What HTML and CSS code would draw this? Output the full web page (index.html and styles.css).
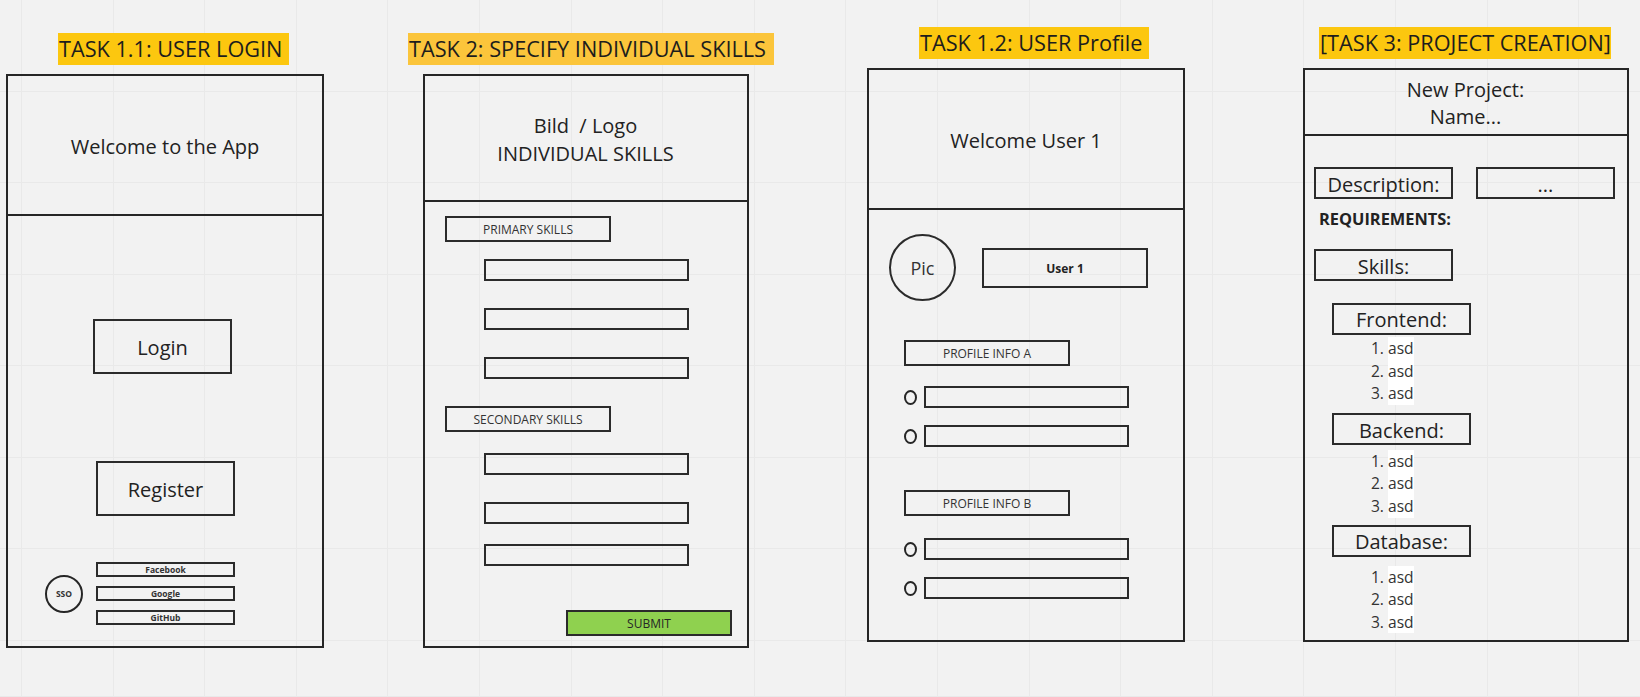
FILE: index.html
```html
<!DOCTYPE html>
<html lang="en">
<head>
<meta charset="utf-8">
<title>Wireframes</title>
<link rel="stylesheet" href="styles.css">
</head>
<body>
<main class="board">
  <h2 class="label label-1">TASK 1.1: USER LOGIN</h2>
  <h2 class="label label-2">TASK 2: SPECIFY INDIVIDUAL SKILLS</h2>
  <h2 class="label label-3">TASK 1.2: USER Profile</h2>
  <h2 class="label label-4">[TASK 3: PROJECT CREATION]</h2>

  <section class="frame frame-login">
    <header class="head head-login">Welcome to the App</header>
    <div class="box btn-login">Login</div>
    <div class="box btn-register">Register</div>
    <div class="sso-row">
      <div class="sso-circle">SSO</div>
      <div class="sso-list">
        <div class="box sso-btn">Facebook</div>
        <div class="box sso-btn">Google</div>
        <div class="box sso-btn">GitHub</div>
      </div>
    </div>
  </section>

  <section class="frame frame-skills">
    <header class="head head-skills">Bild &nbsp;/ Logo<br>INDIVIDUAL SKILLS</header>
    <div class="box tag tag-primary">PRIMARY SKILLS</div>
    <div class="box field skill s1"></div>
    <div class="box field skill s2"></div>
    <div class="box field skill s2"></div>
    <div class="box tag tag-secondary">SECONDARY SKILLS</div>
    <div class="box field skill s3"></div>
    <div class="box field skill s2"></div>
    <div class="box field skill s4"></div>
    <div class="box tag submit">SUBMIT</div>
  </section>

  <section class="frame frame-profile">
    <header class="head head-profile">Welcome User 1</header>
    <div class="user-row">
      <div class="pic">Pic</div>
      <div class="box user-name">User 1</div>
    </div>
    <div class="box tag tag-info-a">PROFILE INFO A</div>
    <div class="radio-row r1"><span class="oval"></span><div class="box field"></div></div>
    <div class="radio-row r2"><span class="oval"></span><div class="box field"></div></div>
    <div class="box tag tag-info-b">PROFILE INFO B</div>
    <div class="radio-row r3"><span class="oval"></span><div class="box field"></div></div>
    <div class="radio-row r2"><span class="oval"></span><div class="box field"></div></div>
  </section>

  <section class="frame frame-project">
    <header class="head head-project">New Project:<br>Name...</header>
    <div class="desc-row">
      <div class="box big">Description:</div>
      <div class="box big">...</div>
    </div>
    <div class="requirements">REQUIREMENTS:</div>
    <div class="box big skills">Skills:</div>
    <div class="box big sub sub-front">Frontend:</div>
    <ol class="asd list-front"><li><span>asd</span></li><li><span>asd</span></li><li><span>asd</span></li></ol>
    <div class="box big sub sub-back">Backend:</div>
    <ol class="asd list-back"><li><span>asd</span></li><li><span>asd</span></li><li><span>asd</span></li></ol>
    <div class="box big sub sub-db">Database:</div>
    <ol class="asd list-db"><li><span>asd</span></li><li><span>asd</span></li><li><span>asd</span></li></ol>
  </section>
</main>
</body>
</html>
```
FILE: styles.css
```css
* { box-sizing: border-box; }

html, body {
  margin: 0;
  padding: 0;
}

body {
  font-family: "Open Sans", "Liberation Sans", sans-serif;
  color: #222;
  background: #f2f2f2;
}

.board {
  position: relative;
  width: 1640px;
  height: 697px;
  overflow: hidden;
  background-color: #f2f2f2;
  background-image:
    repeating-linear-gradient(90deg, #e9e9e9 0, #e9e9e9 1px, transparent 1px, transparent 91.6px),
    repeating-linear-gradient(180deg, #e9e9e9 0, #e9e9e9 1px, transparent 1px, transparent 91.55px);
  background-position: 21px 0, 0 -1px;
}

/* Sticky headings on the board */
.label {
  position: absolute;
  margin: 0;
  height: 32px;
  padding-left: 1px;
  font-size: 21.7px;
  font-weight: 400;
  line-height: 32px;
  color: #1d1d1d;
  background: #fcc70f;
  white-space: nowrap;
}
.label-1 { left: 58px; top: 33px; width: 231px; }
.label-2 { left: 408px; top: 33px; width: 366px; background: #fbc53b; }
.label-3 { left: 919px; top: 27px; width: 230px; }
.label-4 { left: 1319px; top: 27px; width: 292px; }

/* Wireframe phones on the board */
.frame {
  position: absolute;
  border: 2px solid #262626;
  display: flex;
  flex-direction: column;
  align-items: flex-start;
}
.frame-login { left: 6px; top: 74px; width: 318px; height: 574px; }
.frame-skills { left: 423px; top: 74px; width: 326px; height: 574px; }
.frame-profile { left: 867px; top: 68px; width: 318px; height: 574px; }
.frame-project { left: 1303px; top: 68px; width: 326px; height: 574px; }

.head {
  width: 100%;
  flex: none;
  display: flex;
  align-items: center;
  justify-content: center;
  text-align: center;
  border-bottom: 2px solid #262626;
  font-size: 20px;
  color: #222;
}
.head-login { height: 140px; padding-top: 3px; }
.head-skills { height: 126px; line-height: 28px; padding: 3px 1px 0 0; }
.head-profile { height: 140px; padding-top: 3px; }
.head-project { height: 66px; line-height: 27px; padding: 1px 1px 0 0; }

.box {
  flex: none;
  display: flex;
  align-items: center;
  justify-content: center;
  border: 2px solid #2b2b2b;
  white-space: nowrap;
}

/* Login */
.btn-login { margin: 103px 0 0 85px; width: 139px; height: 55px; font-size: 20px; padding-top: 2px; }
.btn-register { margin: 87px 0 0 88px; width: 139px; height: 55px; font-size: 20px; padding-top: 2px; }
.sso-row {
  display: flex;
  align-items: center;
  gap: 13px;
  margin: 46px 0 0 37px;
}
.sso-circle {
  width: 38px;
  height: 38px;
  display: flex;
  align-items: center;
  justify-content: center;
  border: 2px solid #262626;
  border-radius: 50%;
  font-size: 8.5px;
  font-weight: 700;
  color: #333;
}
.sso-list { display: flex; flex-direction: column; gap: 9px; }
.sso-btn { width: 139px; height: 15px; font-size: 8.5px; font-weight: 700; color: #333; }

/* Skills */
.tag { width: 166px; height: 26px; font-size: 12px; color: #333; }
.tag-primary { margin: 14px 0 0 20px; }
.tag-secondary { margin: 27px 0 0 20px; }
.field { width: 205px; height: 22px; }
.skill { margin-left: 59px; }
.s1 { margin-top: 17px; }
.s2 { margin-top: 27px; }
.s3 { margin-top: 21px; }
.s4 { margin-top: 20px; }
.submit { margin: 44px 0 0 141px; background: #8fd14f; color: #262626; }

/* Profile */
.user-row {
  display: flex;
  align-items: center;
  gap: 26px;
  margin: 24px 0 0 20px;
}
.pic {
  width: 67px;
  height: 67px;
  display: flex;
  align-items: center;
  justify-content: center;
  border: 2px solid #2b2b2b;
  border-radius: 50%;
  font-size: 18px;
  color: #333;
}
.user-name { width: 166px; height: 40px; font-size: 12px; font-weight: 700; padding-top: 1px; }
.tag-info-a { margin: 39px 0 0 35px; }
.tag-info-b { margin: 43px 0 0 35px; }
.radio-row {
  display: flex;
  align-items: center;
  gap: 7px;
  margin-left: 35px;
}
.r1 { margin-top: 20px; }
.r2 { margin-top: 17px; }
.r3 { margin-top: 22px; }
.oval {
  width: 13px;
  height: 15px;
  border: 2px solid #262626;
  border-radius: 50%;
}

/* Project */
.big { width: 139px; height: 32px; font-size: 20px; padding-top: 3px; }
.desc-row {
  display: flex;
  gap: 23px;
  margin: 31px 0 0 9px;
}
.requirements {
  margin: 10px 0 0 14px;
  font-size: 16.4px;
  font-weight: 700;
  line-height: 20px;
}
.skills { margin: 20px 0 0 9px; }
.sub { margin-left: 27px; padding-top: 1px; }
.sub-front { margin-top: 22px; }
.sub-back { margin-top: 8px; padding-top: 3px; }
.sub-db { margin-top: 7px; }
.asd {
  margin: 0;
  padding: 0 0 0 83px;
  font-size: 15.6px;
  line-height: 22.6px;
  color: #333;
}
.asd li { height: 22.6px; }
.asd span { display: inline-block; background: #fff; height: 22.6px; }
.list-front { margin-top: 2px; }
.list-back { margin-top: 5px; }
.list-db { margin-top: 9px; }
```
